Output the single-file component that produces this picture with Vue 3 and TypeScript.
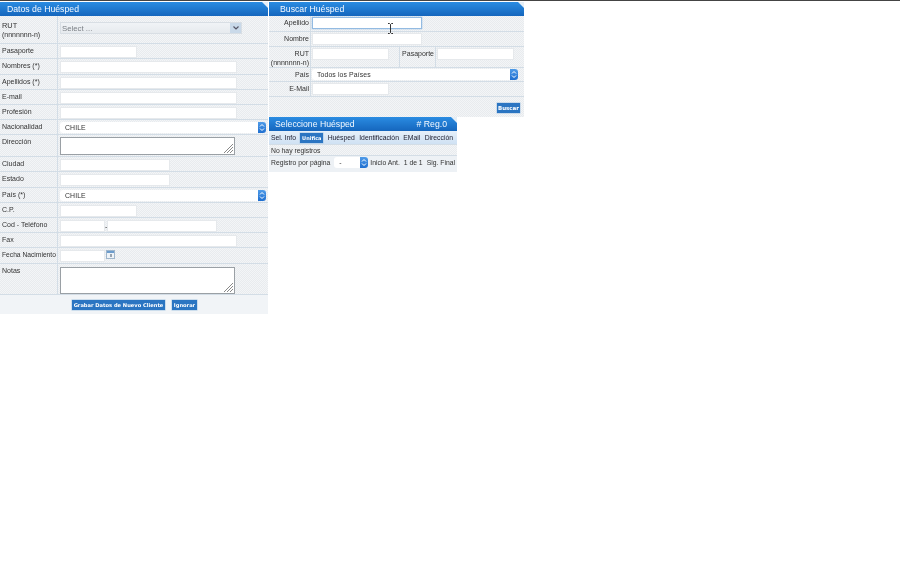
<script setup lang="ts">
const plainRows = [
  { label: 'Pasaporte', h: 15, w: 77 },
  { label: 'Nombres (*)', h: 16, w: 177 },
  { label: 'Apellidos (*)', h: 15, w: 177 },
  { label: 'E-mail', h: 15, w: 177 },
  { label: 'Profesión', h: 15, w: 177 },
]
const columns = ['Huésped', 'Identificación', 'EMail', 'Dirección']
</script>

<template>
  <div class="page">
    <div class="topline"></div>
    <div class="columns">
      <section class="panel left">
        <header class="head"><span class="title tl">Datos de Huésped</span><i class="fold"></i></header>
        <div class="row" style="height:28px">
          <div class="lab first"><span class="rut">RUT</span><span>(nnnnnnn-n)</span></div>
          <div class="val">
            <div class="combo"><span>Select ...</span><b class="cbtn"><svg width="8" height="6" viewBox="0 0 8 6"><path d="M1.500 1.500l2.500 2.500 2.500-2.500" fill="none" stroke="#556" stroke-width="1.200"/></svg></b></div>
          </div>
        </div>
        <div v-for="r in plainRows" :key="r.label" class="row" :style="{ height: r.h + 'px' }">
          <div class="lab">{{ r.label }}</div>
          <div class="val"><div class="inp" :style="{ width: r.w + 'px' }"></div></div>
        </div>
        <div class="row" style="height:15px">
          <div class="lab">Nacionalidad</div>
          <div class="val"><div class="sel wide"><span>CHILE</span><b class="arrows"><svg width="6" height="9" viewBox="0 0 6 9"><path d="M1 3.500L3 1.500 5 3.500M1 5.500L3 7.500 5 5.500" fill="none" stroke="#fff"/></svg></b></div></div>
        </div>
        <div class="row" style="height:22px">
          <div class="lab">Dirección</div>
          <div class="val"><div class="area" style="height:18px"><svg class="grip" width="9" height="9" viewBox="0 0 9 9"><path d="M0 9L9 0M3 9L9 3M6 9L9 6" stroke="#888"/></svg></div></div>
        </div>
        <div class="row" style="height:15px"><div class="lab">Ciudad</div><div class="val"><div class="inp" style="width:110px"></div></div></div>
        <div class="row" style="height:16px"><div class="lab">Estado</div><div class="val"><div class="inp" style="width:110px"></div></div></div>
        <div class="row" style="height:15px">
          <div class="lab">País (*)</div>
          <div class="val"><div class="sel wide"><span>CHILE</span><b class="arrows"><svg width="6" height="9" viewBox="0 0 6 9"><path d="M1 3.500L3 1.500 5 3.500M1 5.500L3 7.500 5 5.500" fill="none" stroke="#fff"/></svg></b></div></div>
        </div>
        <div class="row" style="height:15px"><div class="lab">C.P.</div><div class="val"><div class="inp" style="width:77px"></div></div></div>
        <div class="row" style="height:15px">
          <div class="lab">Cod - Teléfono</div>
          <div class="val phone"><div class="inp" style="width:45px"></div><span class="dash">-</span><div class="inp" style="width:110px"></div></div>
        </div>
        <div class="row" style="height:15px"><div class="lab">Fax</div><div class="val"><div class="inp" style="width:177px"></div></div></div>
        <div class="row" style="height:16px">
          <div class="lab nowrap">Fecha Nacimiento</div>
          <div class="val phone"><div class="inp" style="width:45px"></div>
            <svg class="cal" width="9" height="9" viewBox="0 0 9 9"><rect x=".5" y=".5" width="8" height="8" fill="#eef3f8" stroke="#9fb6cc"/><rect x="1" y="1" width="7" height="2" fill="#6c9ccc"/><rect x="4" y="4" width="2" height="3" fill="#98a4b0"/></svg>
          </div>
        </div>
        <div class="row" style="height:31px">
          <div class="lab">Notas</div>
          <div class="val"><div class="area low" style="height:27px"><svg class="grip" width="9" height="9" viewBox="0 0 9 9"><path d="M0 9L9 0M3 9L9 3M6 9L9 6" stroke="#888"/></svg></div></div>
        </div>
        <div class="actions">
          <button class="btn">Grabar Datos de Nuevo Cliente</button>
          <button class="btn">Ignorar</button>
        </div>
      </section>

      <div class="rightcol">
        <section class="panel search">
          <header class="head"><span class="title ts">Buscar Huésped</span><i class="fold"></i></header>
          <div class="row2" style="height:16px"><div class="lab2">Apellido</div><div class="val2"><div class="inp focus" style="width:110px"></div></div></div>
          <div class="row2" style="height:15px"><div class="lab2">Nombre</div><div class="val2"><div class="inp" style="width:110px"></div></div></div>
          <div class="row2" style="height:21px">
            <div class="lab2 two"><span>RUT</span><span>(nnnnnnn-n)</span></div>
            <div class="val2 rutv">
              <div class="inp" style="width:77px"></div>
              <div class="pasl">Pasaporte</div>
              <div class="inp" style="width:77px"></div>
            </div>
          </div>
          <div class="row2" style="height:14px">
            <div class="lab2">País</div>
            <div class="val2"><div class="sel" style="width:206px"><span>Todos los Países</span><b class="arrows"><svg width="6" height="9" viewBox="0 0 6 9"><path d="M1 3.500L3 1.500 5 3.500M1 5.500L3 7.500 5 5.500" fill="none" stroke="#fff"/></svg></b></div></div>
          </div>
          <div class="row2" style="height:15px"><div class="lab2">E-Mail</div><div class="val2"><div class="inp" style="width:77px"></div></div></div>
          <div class="searchfoot"><button class="btn buscar">Buscar</button></div>
          <svg class="cursor" width="7" height="11" viewBox="0 0 7 11"><path d="M1 .5h1.500L3.500 1.500 4.500 .5H6M3.500 1.500v8M1 10.500h1.500l1-1 1 1H6" fill="none" stroke="#333"/></svg>
        </section>

        <section class="panel result">
          <header class="head"><span class="title tr">Seleccione Huésped</span><span class="title reg"># Reg.0</span><i class="fold"></i></header>
          <div class="thead">
            <span>Sel. Info</span>
            <button class="btn uni">Unifica</button>
            <span v-for="c in columns" :key="c">{{ c }}</span>
          </div>
          <div class="norec">No hay registros</div>
          <div class="pager">
            <span>Registro por página</span>
            <div class="sel mini"><span>-</span><b class="arrows"><svg width="6" height="9" viewBox="0 0 6 9"><path d="M1 3.500L3 1.500 5 3.500M1 5.500L3 7.500 5 5.500" fill="none" stroke="#fff"/></svg></b></div>
            <span>Inicio Ant.</span><span class="of">1 de 1</span><span>Sig. Final</span>
          </div>
        </section>
      </div>
    </div>
  </div>
</template>

<style>
html, body { background: #fff; }
</style>

<style scoped>
.page { width: 900px; height: 570px; overflow: hidden; background: #fff; font-family: "Liberation Sans", Arial, sans-serif; font-size: 7px; color: #333; filter: blur(0.35px); }
.topline { height: 1px; background: #444; width: 900px; margin-bottom: 1px; }
.columns { display: flex; align-items: flex-start; gap: 1px; }
.panel {
  position: relative;
  background-color: #eef1f4;
  background-image: conic-gradient(#e8ebee 25%, #f3f5f7 0 50%, #e8ebee 0 75%, #f3f5f7 0);
  background-size: 2px 2px;
}
.left { width: 268px; }
.rightcol { width: 255px; }
.search { width: 255px; height: 115px; }
.result { width: 188px; height: 55px; }
.head {
  position: relative; height: 14px; display: flex; align-items: center; justify-content: space-between;
  background: linear-gradient(#2a8ce2, #1566bd);
}
.fold { position: absolute; right: 0; top: 0; width: 0; height: 0; border-style: solid; border-width: 0 6px 6px 0; border-color: transparent #e4eef7 transparent transparent; }
.title { color: #f4f9ff; font-size: 8.700px; line-height: 14px; }
.tl { margin-left: 7px; }
.ts { margin-left: 11px; }
.tr { margin-left: 6px; }
.reg { margin-right: 10px; }
.row { display: flex; border-bottom: 1px solid #d3dde6; box-sizing: border-box; }
.lab { width: 58px; flex: none; box-sizing: border-box; padding: 2px 0 0 2px; border-right: 1px solid #d3dde6; font-size: 7px; line-height: 9px; color: #333; }
.first { padding-top: 5px; }
.nowrap { white-space: nowrap; font-size: 6.700px; }
.rut { font-size: 7.400px; }
.lab span { display: block; }
.val { flex: 1; padding: 2px 0 0 2px; }
.phone { display: flex; align-items: flex-start; }
.dash { width: 2px; font-size: 7px; line-height: 13px; }
.inp { height: 12px; background: #fff; border: 1px solid #e6e9ec; box-sizing: border-box; }
.focus { border: 1px solid #93bbe2; box-shadow: 0 0 1px #6aa4dc; }
.cal { margin: 0 0 0 1px; }
.area { position: relative; width: 175px; background: #fff; border: 1px solid #9aa0a5; box-sizing: border-box; }
.low { margin-top: 1px; }
.grip { position: absolute; right: 1px; bottom: 1px; }
.combo { width: 182px; height: 12px; margin-top: 4px; background: linear-gradient(#f0f3f6, #e6eaee); border: 1px solid #d8dee4; box-sizing: border-box; display: flex; justify-content: space-between; align-items: center; padding-left: 1px; color: #7a7f85; font-size: 7.800px; }
.cbtn { width: 11px; height: 10px; background: #c9d9e9; display: flex; align-items: center; justify-content: center; }
.sel { height: 11px; background: #fff; border-radius: 3px; box-sizing: border-box; display: flex; justify-content: space-between; align-items: center; padding-left: 5px; color: #333; font-size: 6.900px; letter-spacing: 0.1px; overflow: hidden; }
.wide { width: 206px; }
.arrows { width: 8px; height: 11px; background: linear-gradient(#4f9be8, #1f6fd0); display: flex; align-items: center; justify-content: center; }
.row2 { display: flex; border-bottom: 1px solid #d3dde6; box-sizing: border-box; }
.lab2 { width: 42px; flex: none; text-align: right; box-sizing: border-box; padding: 2px 1px 0 0; border-right: 1px solid #d3dde6; font-size: 7px; line-height: 9px; }
.lab2 span { display: block; white-space: nowrap; }
.two { padding-top: 2px; }
.val2 { flex: 1; padding: 1px 0 0 1px; }
.rutv { display: flex; align-items: flex-start; }
.pasl { width: 37px; margin: -1px 1px 0 10px; text-align: right; padding: 2px 1px 0 0; box-sizing: border-box; font-size: 7px; line-height: 9px; height: 20px; border-left: 1px solid #d3dde6; border-right: 1px solid #d3dde6; }
.searchfoot { display: flex; justify-content: flex-end; padding: 6px 4px 0 0; }
.btn { border: 0; padding: 0; margin: 0; background: #2b75c2; color: #fff; font-family: "DejaVu Sans", sans-serif; font-weight: 700; font-size: 5.150px; height: 10px; line-height: 10px; box-shadow: 0 0 0 .5px #a8c6e2; white-space: nowrap; }
.buscar { width: 23px; font-size: 5.500px; }
.cursor { position: absolute; left: 118px; top: 21px; }
.actions { display: flex; justify-content: center; gap: 7px; height: 19px; padding: 1px 0 0 1px; box-sizing: border-box; align-items: center; background: #f1f4f7; }
.actions .btn:first-child { width: 93px; }
.actions .btn:last-child { width: 25px; }
.thead { display: flex; align-items: center; justify-content: space-between; height: 14px; padding: 0 4px 0 2px; background: linear-gradient(#e6f0fa, #cfe1f3); font-size: 6.800px; color: #223; border-bottom: 1px solid #d3dde6; box-sizing: border-box; }
.uni { width: 23px; font-size: 5px; }
.norec { height: 11px; line-height: 12px; padding-left: 2px; border-bottom: 1px solid #d3dde6; box-sizing: border-box; font-size: 6.800px; }
.pager { height: 16px; display: flex; align-items: flex-start; padding: 1px 2px 0; gap: 1px; line-height: 12px; font-size: 6.800px; white-space: nowrap; background: #edf1f5; box-sizing: border-box; }
.mini { width: 34px; margin: 0 1px 0 3px; }
.of { margin: 0 3px 0 auto; }
</style>
